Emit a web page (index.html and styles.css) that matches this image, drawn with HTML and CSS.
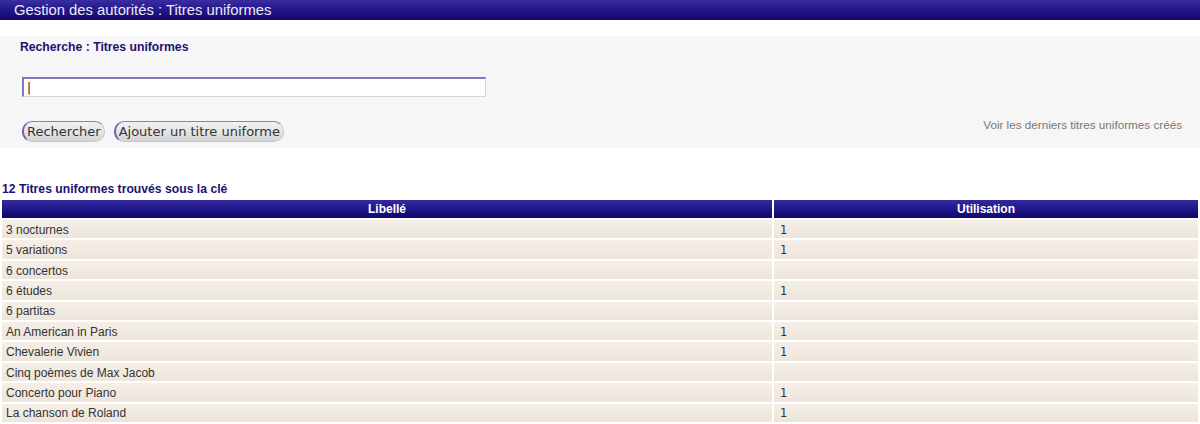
FILE: index.html
```html
<!DOCTYPE html>
<html lang="fr">
<head>
<meta charset="utf-8">
<title>Gestion des autorités</title>
<link rel="stylesheet" href="styles.css">
</head>
<body>
<div class="titlebar">Gestion des autorités : Titres uniformes</div>
<div class="panel">
  <div class="panel-title">Recherche : Titres uniformes</div>
  <div class="input-row"><input class="search" type="text" value="|"></div>
  <div class="actions">
    <div class="btns">
      <button class="btn">Rechercher</button>
      <button class="btn">Ajouter un titre uniforme</button>
    </div>
    <span class="last-link">Voir les derniers titres uniformes créés</span>
  </div>
</div>
<div class="results-title">12 Titres uniformes trouvés sous la clé</div>
<table class="results">
  <thead>
    <tr><th class="col-lib">Libellé</th><th>Utilisation</th></tr>
  </thead>
  <tbody>
    <tr><td>3 nocturnes</td><td class="num">1</td></tr>
    <tr><td>5 variations</td><td class="num">1</td></tr>
    <tr><td>6 concertos</td><td class="num"></td></tr>
    <tr><td>6 études</td><td class="num">1</td></tr>
    <tr><td>6 partitas</td><td class="num"></td></tr>
    <tr><td>An American in Paris</td><td class="num">1</td></tr>
    <tr><td>Chevalerie Vivien</td><td class="num">1</td></tr>
    <tr><td>Cinq poèmes de Max Jacob</td><td class="num"></td></tr>
    <tr><td>Concerto pour Piano</td><td class="num">1</td></tr>
    <tr><td>La chanson de Roland</td><td class="num">1</td></tr>
  </tbody>
</table>
</body>
</html>
```
FILE: styles.css
```css
html, body {
  margin: 0;
  padding: 0;
  background: #ffffff;
  font-family: "Liberation Sans", Arial, sans-serif;
}

.titlebar {
  height: 20px;
  line-height: 20px;
  padding-left: 14px;
  font-size: 14.8px;
  color: #ecebf5;
  background: linear-gradient(to bottom, #3a2ea0 0%, #251890 45%, #10086a 100%);
  margin-bottom: 16px;
}

.panel {
  background: #f6f6f6;
  height: 112px;
  padding: 0 18px 0 20px;
  box-sizing: border-box;
  display: flex;
  flex-direction: column;
}

.panel-title {
  font-size: 12.2px;
  font-weight: bold;
  color: #1c1270;
  padding-top: 4px;
  line-height: 14px;
  height: 14px;
}

.input-row {
  margin-top: 23px;
  height: 20px;
}

.search {
  box-sizing: border-box;
  width: 464px;
  height: 20px;
  margin: 0 0 0 2px;
  padding: 0 3px;
  font-family: "DejaVu Sans", sans-serif;
  font-size: 12px;
  color: #111;
  background: #ffffff;
  border-style: solid;
  border-width: 2px 1px 1px 2px;
  border-color: #8478bd #d6d6d6 #d6d6d6 #8478bd;
  outline: none;
}

.actions {
  margin-top: 24px;
  display: flex;
  align-items: center;
  justify-content: space-between;
}

.btns {
  display: flex;
  gap: 9px;
  margin-left: 2px;
}

.btn {
  height: 21px;
  padding: 0 3px;
  font-family: "DejaVu Sans", sans-serif;
  font-size: 13px;
  color: #333;
  border-radius: 10px;
  border-style: solid;
  border-width: 1px 1px 1px 2px;
  border-color: #8a7fc0 #c9c9c9 #c9c9c9 #6a5fb0;
  background: linear-gradient(to bottom, #f2f2f2 0%, #e2e2e2 60%, #d3d3d3 100%);
}

.last-link {
  align-self: flex-start;
  line-height: 14px;
  font-size: 11.7px;
  color: #777777;
  margin-top: -3px;
}

.results-title {
  margin-top: 34px;
  padding-left: 2px;
  font-size: 12.2px;
  font-weight: bold;
  color: #1c1270;
  line-height: 14px;
  height: 14px;
}

.results {
  width: 100%;
  border-collapse: separate;
  border-spacing: 2px;
  margin-top: 2px;
  font-size: 12px;
}

.results th {
  height: 14px;
  line-height: 14px;
  padding: 2px 4px;
  color: #ffffff;
  font-weight: bold;
  text-align: center;
  background: linear-gradient(to bottom, #342a9c 0%, #22178a 50%, #0e0868 100%);
}

.results .col-lib {
  width: 762px;
}

.results td {
  padding: 2.8px 4px 1.6px;
  height: 14px;
  line-height: 14px;
  color: #333333;
  background: linear-gradient(to bottom, #f6efe7 0%, #ede5dc 100%);
}

.results td.num {
  font-family: "DejaVu Sans", sans-serif;
  font-size: 11.5px;
  padding-left: 6px;
}
```
